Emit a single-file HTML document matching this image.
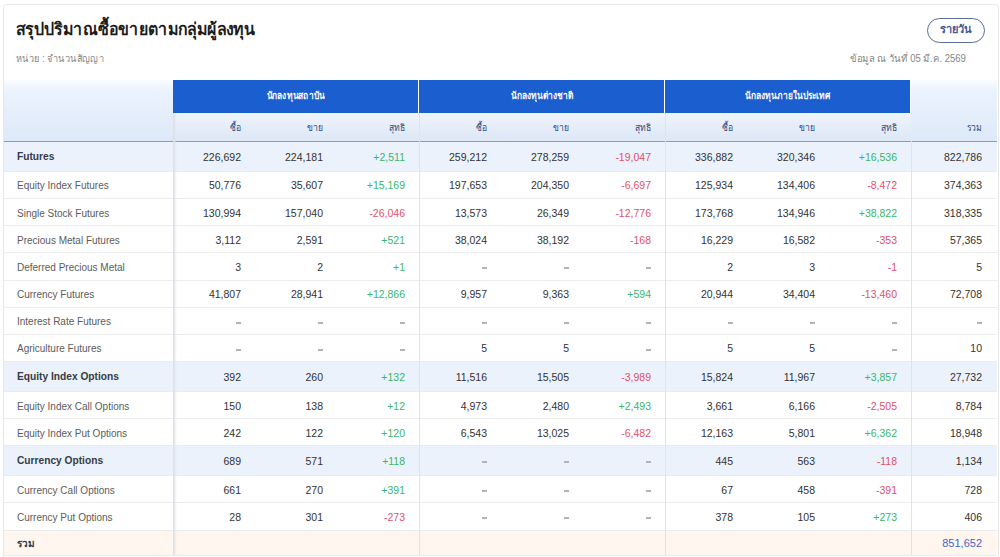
<!DOCTYPE html><html><head><meta charset="utf-8"><style>
*{margin:0;padding:0;box-sizing:border-box}
html,body{width:1000px;height:557px;overflow:hidden;background:#fff;font-family:"Liberation Sans",sans-serif}
.card{position:absolute;left:3px;top:4px;width:996px;height:560px;border:1px solid #e8e8e8;border-radius:4px;background:#fff}
.abs{position:absolute;white-space:nowrap}
.title{left:16px;top:18px;font-size:17px;font-weight:bold;color:#1c1c1c;line-height:24px;transform:scaleX(0.937);transform-origin:0 0}
.unit{left:16px;top:52px;font-size:10px;color:#858585;line-height:14px;transform:scaleX(0.915);transform-origin:0 0}
.date{right:34px;top:52px;font-size:10px;color:#858585;line-height:14px;transform:scaleX(0.95);transform-origin:100% 0}
.btn{left:927px;top:17.5px;width:58px;height:25.5px;border:1.5px solid #5a6e99;border-radius:13px;color:#45598f;font-size:11px;font-weight:bold;text-align:center;line-height:21.5px}
.hdl{left:4px;top:80px;width:169px;height:61px;background:linear-gradient(#fafcff 0px,#ebf3fd 10px,#dde9f9 100%)}
.hdt{left:911px;top:80px;width:86px;height:61px;background:linear-gradient(#fafcff 0px,#ebf3fd 10px,#dde9f9 100%)}
.band{top:80px;height:33px;width:245px;background:#1a5ecf;color:#fff;font-size:10px;text-align:center;line-height:31px;font-weight:bold}
.band span{display:inline-block;transform:scaleX(0.84)}
.sub{top:113px;height:28px;width:246px;background:linear-gradient(#eef4fc,#dde7f6)}
.hline{left:4px;top:140.8px;width:993px;height:1.3px;background:#8e9cb0}
.sh{top:113px;height:28px;line-height:29px;font-size:10px;color:#34497c;text-align:right}
.sh span{display:inline-block;transform:scaleX(0.86);transform-origin:100% 50%}
.row{left:4px;width:993px;border-bottom:1px solid #ececec}
.lab{left:17px;font-size:10px;color:#5c5c5c;margin-top:0.6px}
.labb{left:17px;font-size:10.2px;font-weight:bold;color:#363b44}
.num{font-size:10.5px;color:#333;text-align:right;margin-top:0.6px}
.pos{color:#3ab56c}
.neg{color:#e2506b}
.dash i{display:inline-block;width:5px;height:2px;background:#b4b4b4;vertical-align:middle;position:relative;top:0px;margin-right:-0.3px}
.vl{top:80px;width:1px;height:475px;background:#e0e4ea}
.vl0{width:4px;background:linear-gradient(90deg,#dde0e6 0,#dde0e6 1px,rgba(225,228,234,0.5) 2px,rgba(240,242,245,0) 4px)}
</style></head><body>
<div class="card"></div>
<div class="abs title">สรุปปริมาณซื้อขายตามกลุ่มผู้ลงทุน</div>
<div class="abs unit">หน่วย : จำนวนสัญญา</div>
<div class="abs btn">รายวัน</div>
<div class="abs date">ข้อมูล ณ วันที่ 05 มี.ค. 2569</div>

<div class="abs row" style="top:142.0px;height:29.9px;background:#ebf2fc"></div>
<div class="abs row" style="top:171.9px;height:27.2px;background:#ffffff"></div>
<div class="abs row" style="top:199.1px;height:27.2px;background:#ffffff"></div>
<div class="abs row" style="top:226.3px;height:27.2px;background:#ffffff"></div>
<div class="abs row" style="top:253.4px;height:27.2px;background:#ffffff"></div>
<div class="abs row" style="top:280.6px;height:27.2px;background:#ffffff"></div>
<div class="abs row" style="top:307.8px;height:27.2px;background:#ffffff"></div>
<div class="abs row" style="top:334.9px;height:27.2px;background:#ffffff"></div>
<div class="abs row" style="top:362.1px;height:29.9px;background:#ebf2fc"></div>
<div class="abs row" style="top:392.0px;height:27.2px;background:#ffffff"></div>
<div class="abs row" style="top:419.2px;height:27.2px;background:#ffffff"></div>
<div class="abs row" style="top:446.3px;height:29.9px;background:#ebf2fc"></div>
<div class="abs row" style="top:476.3px;height:27.2px;background:#ffffff"></div>
<div class="abs row" style="top:503.5px;height:27.2px;background:#ffffff"></div>
<div class="abs row" style="top:530.6px;height:25.2px;background:#fef6ef"></div>
<div class="abs hdl"></div><div class="abs hdt"></div>
<div class="abs band" style="left:173px"><span>นักลงทุนสถาบัน</span></div>
<div class="abs sub" style="left:173px"></div>
<div class="abs sh" style="left:173px;width:68px"><span>ซื้อ</span></div>
<div class="abs sh" style="left:255px;width:68px"><span>ขาย</span></div>
<div class="abs sh" style="left:337px;width:68px"><span>สุทธิ</span></div>
<div class="abs band" style="left:419px"><span>นักลงทุนต่างชาติ</span></div>
<div class="abs sub" style="left:419px"></div>
<div class="abs sh" style="left:419px;width:68px"><span>ซื้อ</span></div>
<div class="abs sh" style="left:501px;width:68px"><span>ขาย</span></div>
<div class="abs sh" style="left:583px;width:68px"><span>สุทธิ</span></div>
<div class="abs band" style="left:665px"><span>นักลงทุนภายในประเทศ</span></div>
<div class="abs sub" style="left:665px"></div>
<div class="abs sh" style="left:665px;width:68px"><span>ซื้อ</span></div>
<div class="abs sh" style="left:747px;width:68px"><span>ขาย</span></div>
<div class="abs sh" style="left:829px;width:68px"><span>สุทธิ</span></div>
<div class="abs sh" style="left:911px;width:71px"><span>รวม</span></div>
<div class="abs hline"></div>
<div class="abs vl vl0" style="left:173px;top:113px;height:442px"></div>
<div class="abs vl" style="left:419px;top:113px;height:442px"></div>
<div class="abs vl" style="left:665px;top:113px;height:442px"></div>
<div class="abs vl" style="left:911px;top:141px;height:414px"></div>
<div class="abs labb" style="top:142.0px;line-height:29.9px">Futures</div>
<div class="abs num" style="left:173px;width:68px;top:142.0px;line-height:29.9px">226,692</div>
<div class="abs num" style="left:255px;width:68px;top:142.0px;line-height:29.9px">224,181</div>
<div class="abs num pos" style="left:337px;width:68px;top:142.0px;line-height:29.9px">+2,511</div>
<div class="abs num" style="left:419px;width:68px;top:142.0px;line-height:29.9px">259,212</div>
<div class="abs num" style="left:501px;width:68px;top:142.0px;line-height:29.9px">278,259</div>
<div class="abs num neg" style="left:583px;width:68px;top:142.0px;line-height:29.9px">-19,047</div>
<div class="abs num" style="left:665px;width:68px;top:142.0px;line-height:29.9px">336,882</div>
<div class="abs num" style="left:747px;width:68px;top:142.0px;line-height:29.9px">320,346</div>
<div class="abs num pos" style="left:829px;width:68px;top:142.0px;line-height:29.9px">+16,536</div>
<div class="abs num" style="left:911px;width:71px;top:142.0px;line-height:29.9px">822,786</div>
<div class="abs lab" style="top:171.9px;line-height:27.2px">Equity Index Futures</div>
<div class="abs num" style="left:173px;width:68px;top:171.9px;line-height:27.2px">50,776</div>
<div class="abs num" style="left:255px;width:68px;top:171.9px;line-height:27.2px">35,607</div>
<div class="abs num pos" style="left:337px;width:68px;top:171.9px;line-height:27.2px">+15,169</div>
<div class="abs num" style="left:419px;width:68px;top:171.9px;line-height:27.2px">197,653</div>
<div class="abs num" style="left:501px;width:68px;top:171.9px;line-height:27.2px">204,350</div>
<div class="abs num neg" style="left:583px;width:68px;top:171.9px;line-height:27.2px">-6,697</div>
<div class="abs num" style="left:665px;width:68px;top:171.9px;line-height:27.2px">125,934</div>
<div class="abs num" style="left:747px;width:68px;top:171.9px;line-height:27.2px">134,406</div>
<div class="abs num neg" style="left:829px;width:68px;top:171.9px;line-height:27.2px">-8,472</div>
<div class="abs num" style="left:911px;width:71px;top:171.9px;line-height:27.2px">374,363</div>
<div class="abs lab" style="top:199.1px;line-height:27.2px">Single Stock Futures</div>
<div class="abs num" style="left:173px;width:68px;top:199.1px;line-height:27.2px">130,994</div>
<div class="abs num" style="left:255px;width:68px;top:199.1px;line-height:27.2px">157,040</div>
<div class="abs num neg" style="left:337px;width:68px;top:199.1px;line-height:27.2px">-26,046</div>
<div class="abs num" style="left:419px;width:68px;top:199.1px;line-height:27.2px">13,573</div>
<div class="abs num" style="left:501px;width:68px;top:199.1px;line-height:27.2px">26,349</div>
<div class="abs num neg" style="left:583px;width:68px;top:199.1px;line-height:27.2px">-12,776</div>
<div class="abs num" style="left:665px;width:68px;top:199.1px;line-height:27.2px">173,768</div>
<div class="abs num" style="left:747px;width:68px;top:199.1px;line-height:27.2px">134,946</div>
<div class="abs num pos" style="left:829px;width:68px;top:199.1px;line-height:27.2px">+38,822</div>
<div class="abs num" style="left:911px;width:71px;top:199.1px;line-height:27.2px">318,335</div>
<div class="abs lab" style="top:226.3px;line-height:27.2px">Precious Metal Futures</div>
<div class="abs num" style="left:173px;width:68px;top:226.3px;line-height:27.2px">3,112</div>
<div class="abs num" style="left:255px;width:68px;top:226.3px;line-height:27.2px">2,591</div>
<div class="abs num pos" style="left:337px;width:68px;top:226.3px;line-height:27.2px">+521</div>
<div class="abs num" style="left:419px;width:68px;top:226.3px;line-height:27.2px">38,024</div>
<div class="abs num" style="left:501px;width:68px;top:226.3px;line-height:27.2px">38,192</div>
<div class="abs num neg" style="left:583px;width:68px;top:226.3px;line-height:27.2px">-168</div>
<div class="abs num" style="left:665px;width:68px;top:226.3px;line-height:27.2px">16,229</div>
<div class="abs num" style="left:747px;width:68px;top:226.3px;line-height:27.2px">16,582</div>
<div class="abs num neg" style="left:829px;width:68px;top:226.3px;line-height:27.2px">-353</div>
<div class="abs num" style="left:911px;width:71px;top:226.3px;line-height:27.2px">57,365</div>
<div class="abs lab" style="top:253.4px;line-height:27.2px">Deferred Precious Metal</div>
<div class="abs num" style="left:173px;width:68px;top:253.4px;line-height:27.2px">3</div>
<div class="abs num" style="left:255px;width:68px;top:253.4px;line-height:27.2px">2</div>
<div class="abs num pos" style="left:337px;width:68px;top:253.4px;line-height:27.2px">+1</div>
<div class="abs num dash" style="left:419px;width:68px;top:253.4px;line-height:27.2px"><i></i></div>
<div class="abs num dash" style="left:501px;width:68px;top:253.4px;line-height:27.2px"><i></i></div>
<div class="abs num dash" style="left:583px;width:68px;top:253.4px;line-height:27.2px"><i></i></div>
<div class="abs num" style="left:665px;width:68px;top:253.4px;line-height:27.2px">2</div>
<div class="abs num" style="left:747px;width:68px;top:253.4px;line-height:27.2px">3</div>
<div class="abs num neg" style="left:829px;width:68px;top:253.4px;line-height:27.2px">-1</div>
<div class="abs num" style="left:911px;width:71px;top:253.4px;line-height:27.2px">5</div>
<div class="abs lab" style="top:280.6px;line-height:27.2px">Currency Futures</div>
<div class="abs num" style="left:173px;width:68px;top:280.6px;line-height:27.2px">41,807</div>
<div class="abs num" style="left:255px;width:68px;top:280.6px;line-height:27.2px">28,941</div>
<div class="abs num pos" style="left:337px;width:68px;top:280.6px;line-height:27.2px">+12,866</div>
<div class="abs num" style="left:419px;width:68px;top:280.6px;line-height:27.2px">9,957</div>
<div class="abs num" style="left:501px;width:68px;top:280.6px;line-height:27.2px">9,363</div>
<div class="abs num pos" style="left:583px;width:68px;top:280.6px;line-height:27.2px">+594</div>
<div class="abs num" style="left:665px;width:68px;top:280.6px;line-height:27.2px">20,944</div>
<div class="abs num" style="left:747px;width:68px;top:280.6px;line-height:27.2px">34,404</div>
<div class="abs num neg" style="left:829px;width:68px;top:280.6px;line-height:27.2px">-13,460</div>
<div class="abs num" style="left:911px;width:71px;top:280.6px;line-height:27.2px">72,708</div>
<div class="abs lab" style="top:307.8px;line-height:27.2px">Interest Rate Futures</div>
<div class="abs num dash" style="left:173px;width:68px;top:307.8px;line-height:27.2px"><i></i></div>
<div class="abs num dash" style="left:255px;width:68px;top:307.8px;line-height:27.2px"><i></i></div>
<div class="abs num dash" style="left:337px;width:68px;top:307.8px;line-height:27.2px"><i></i></div>
<div class="abs num dash" style="left:419px;width:68px;top:307.8px;line-height:27.2px"><i></i></div>
<div class="abs num dash" style="left:501px;width:68px;top:307.8px;line-height:27.2px"><i></i></div>
<div class="abs num dash" style="left:583px;width:68px;top:307.8px;line-height:27.2px"><i></i></div>
<div class="abs num dash" style="left:665px;width:68px;top:307.8px;line-height:27.2px"><i></i></div>
<div class="abs num dash" style="left:747px;width:68px;top:307.8px;line-height:27.2px"><i></i></div>
<div class="abs num dash" style="left:829px;width:68px;top:307.8px;line-height:27.2px"><i></i></div>
<div class="abs num dash" style="left:911px;width:71px;top:307.8px;line-height:27.2px"><i></i></div>
<div class="abs lab" style="top:334.9px;line-height:27.2px">Agriculture Futures</div>
<div class="abs num dash" style="left:173px;width:68px;top:334.9px;line-height:27.2px"><i></i></div>
<div class="abs num dash" style="left:255px;width:68px;top:334.9px;line-height:27.2px"><i></i></div>
<div class="abs num dash" style="left:337px;width:68px;top:334.9px;line-height:27.2px"><i></i></div>
<div class="abs num" style="left:419px;width:68px;top:334.9px;line-height:27.2px">5</div>
<div class="abs num" style="left:501px;width:68px;top:334.9px;line-height:27.2px">5</div>
<div class="abs num dash" style="left:583px;width:68px;top:334.9px;line-height:27.2px"><i></i></div>
<div class="abs num" style="left:665px;width:68px;top:334.9px;line-height:27.2px">5</div>
<div class="abs num" style="left:747px;width:68px;top:334.9px;line-height:27.2px">5</div>
<div class="abs num dash" style="left:829px;width:68px;top:334.9px;line-height:27.2px"><i></i></div>
<div class="abs num" style="left:911px;width:71px;top:334.9px;line-height:27.2px">10</div>
<div class="abs labb" style="top:362.1px;line-height:29.9px">Equity Index Options</div>
<div class="abs num" style="left:173px;width:68px;top:362.1px;line-height:29.9px">392</div>
<div class="abs num" style="left:255px;width:68px;top:362.1px;line-height:29.9px">260</div>
<div class="abs num pos" style="left:337px;width:68px;top:362.1px;line-height:29.9px">+132</div>
<div class="abs num" style="left:419px;width:68px;top:362.1px;line-height:29.9px">11,516</div>
<div class="abs num" style="left:501px;width:68px;top:362.1px;line-height:29.9px">15,505</div>
<div class="abs num neg" style="left:583px;width:68px;top:362.1px;line-height:29.9px">-3,989</div>
<div class="abs num" style="left:665px;width:68px;top:362.1px;line-height:29.9px">15,824</div>
<div class="abs num" style="left:747px;width:68px;top:362.1px;line-height:29.9px">11,967</div>
<div class="abs num pos" style="left:829px;width:68px;top:362.1px;line-height:29.9px">+3,857</div>
<div class="abs num" style="left:911px;width:71px;top:362.1px;line-height:29.9px">27,732</div>
<div class="abs lab" style="top:392.0px;line-height:27.2px">Equity Index Call Options</div>
<div class="abs num" style="left:173px;width:68px;top:392.0px;line-height:27.2px">150</div>
<div class="abs num" style="left:255px;width:68px;top:392.0px;line-height:27.2px">138</div>
<div class="abs num pos" style="left:337px;width:68px;top:392.0px;line-height:27.2px">+12</div>
<div class="abs num" style="left:419px;width:68px;top:392.0px;line-height:27.2px">4,973</div>
<div class="abs num" style="left:501px;width:68px;top:392.0px;line-height:27.2px">2,480</div>
<div class="abs num pos" style="left:583px;width:68px;top:392.0px;line-height:27.2px">+2,493</div>
<div class="abs num" style="left:665px;width:68px;top:392.0px;line-height:27.2px">3,661</div>
<div class="abs num" style="left:747px;width:68px;top:392.0px;line-height:27.2px">6,166</div>
<div class="abs num neg" style="left:829px;width:68px;top:392.0px;line-height:27.2px">-2,505</div>
<div class="abs num" style="left:911px;width:71px;top:392.0px;line-height:27.2px">8,784</div>
<div class="abs lab" style="top:419.2px;line-height:27.2px">Equity Index Put Options</div>
<div class="abs num" style="left:173px;width:68px;top:419.2px;line-height:27.2px">242</div>
<div class="abs num" style="left:255px;width:68px;top:419.2px;line-height:27.2px">122</div>
<div class="abs num pos" style="left:337px;width:68px;top:419.2px;line-height:27.2px">+120</div>
<div class="abs num" style="left:419px;width:68px;top:419.2px;line-height:27.2px">6,543</div>
<div class="abs num" style="left:501px;width:68px;top:419.2px;line-height:27.2px">13,025</div>
<div class="abs num neg" style="left:583px;width:68px;top:419.2px;line-height:27.2px">-6,482</div>
<div class="abs num" style="left:665px;width:68px;top:419.2px;line-height:27.2px">12,163</div>
<div class="abs num" style="left:747px;width:68px;top:419.2px;line-height:27.2px">5,801</div>
<div class="abs num pos" style="left:829px;width:68px;top:419.2px;line-height:27.2px">+6,362</div>
<div class="abs num" style="left:911px;width:71px;top:419.2px;line-height:27.2px">18,948</div>
<div class="abs labb" style="top:446.3px;line-height:29.9px">Currency Options</div>
<div class="abs num" style="left:173px;width:68px;top:446.3px;line-height:29.9px">689</div>
<div class="abs num" style="left:255px;width:68px;top:446.3px;line-height:29.9px">571</div>
<div class="abs num pos" style="left:337px;width:68px;top:446.3px;line-height:29.9px">+118</div>
<div class="abs num dash" style="left:419px;width:68px;top:446.3px;line-height:29.9px"><i></i></div>
<div class="abs num dash" style="left:501px;width:68px;top:446.3px;line-height:29.9px"><i></i></div>
<div class="abs num dash" style="left:583px;width:68px;top:446.3px;line-height:29.9px"><i></i></div>
<div class="abs num" style="left:665px;width:68px;top:446.3px;line-height:29.9px">445</div>
<div class="abs num" style="left:747px;width:68px;top:446.3px;line-height:29.9px">563</div>
<div class="abs num neg" style="left:829px;width:68px;top:446.3px;line-height:29.9px">-118</div>
<div class="abs num" style="left:911px;width:71px;top:446.3px;line-height:29.9px">1,134</div>
<div class="abs lab" style="top:476.3px;line-height:27.2px">Currency Call Options</div>
<div class="abs num" style="left:173px;width:68px;top:476.3px;line-height:27.2px">661</div>
<div class="abs num" style="left:255px;width:68px;top:476.3px;line-height:27.2px">270</div>
<div class="abs num pos" style="left:337px;width:68px;top:476.3px;line-height:27.2px">+391</div>
<div class="abs num dash" style="left:419px;width:68px;top:476.3px;line-height:27.2px"><i></i></div>
<div class="abs num dash" style="left:501px;width:68px;top:476.3px;line-height:27.2px"><i></i></div>
<div class="abs num dash" style="left:583px;width:68px;top:476.3px;line-height:27.2px"><i></i></div>
<div class="abs num" style="left:665px;width:68px;top:476.3px;line-height:27.2px">67</div>
<div class="abs num" style="left:747px;width:68px;top:476.3px;line-height:27.2px">458</div>
<div class="abs num neg" style="left:829px;width:68px;top:476.3px;line-height:27.2px">-391</div>
<div class="abs num" style="left:911px;width:71px;top:476.3px;line-height:27.2px">728</div>
<div class="abs lab" style="top:503.5px;line-height:27.2px">Currency Put Options</div>
<div class="abs num" style="left:173px;width:68px;top:503.5px;line-height:27.2px">28</div>
<div class="abs num" style="left:255px;width:68px;top:503.5px;line-height:27.2px">301</div>
<div class="abs num neg" style="left:337px;width:68px;top:503.5px;line-height:27.2px">-273</div>
<div class="abs num dash" style="left:419px;width:68px;top:503.5px;line-height:27.2px"><i></i></div>
<div class="abs num dash" style="left:501px;width:68px;top:503.5px;line-height:27.2px"><i></i></div>
<div class="abs num dash" style="left:583px;width:68px;top:503.5px;line-height:27.2px"><i></i></div>
<div class="abs num" style="left:665px;width:68px;top:503.5px;line-height:27.2px">378</div>
<div class="abs num" style="left:747px;width:68px;top:503.5px;line-height:27.2px">105</div>
<div class="abs num pos" style="left:829px;width:68px;top:503.5px;line-height:27.2px">+273</div>
<div class="abs num" style="left:911px;width:71px;top:503.5px;line-height:27.2px">406</div>
<div class="abs labb" style="top:530.6px;line-height:25.2px;font-size:10px">รวม</div>
<div class="abs num" style="left:911px;width:71px;top:530.6px;line-height:25.2px;color:#4a63c8;font-size:11px">851,652</div>
</body></html>
